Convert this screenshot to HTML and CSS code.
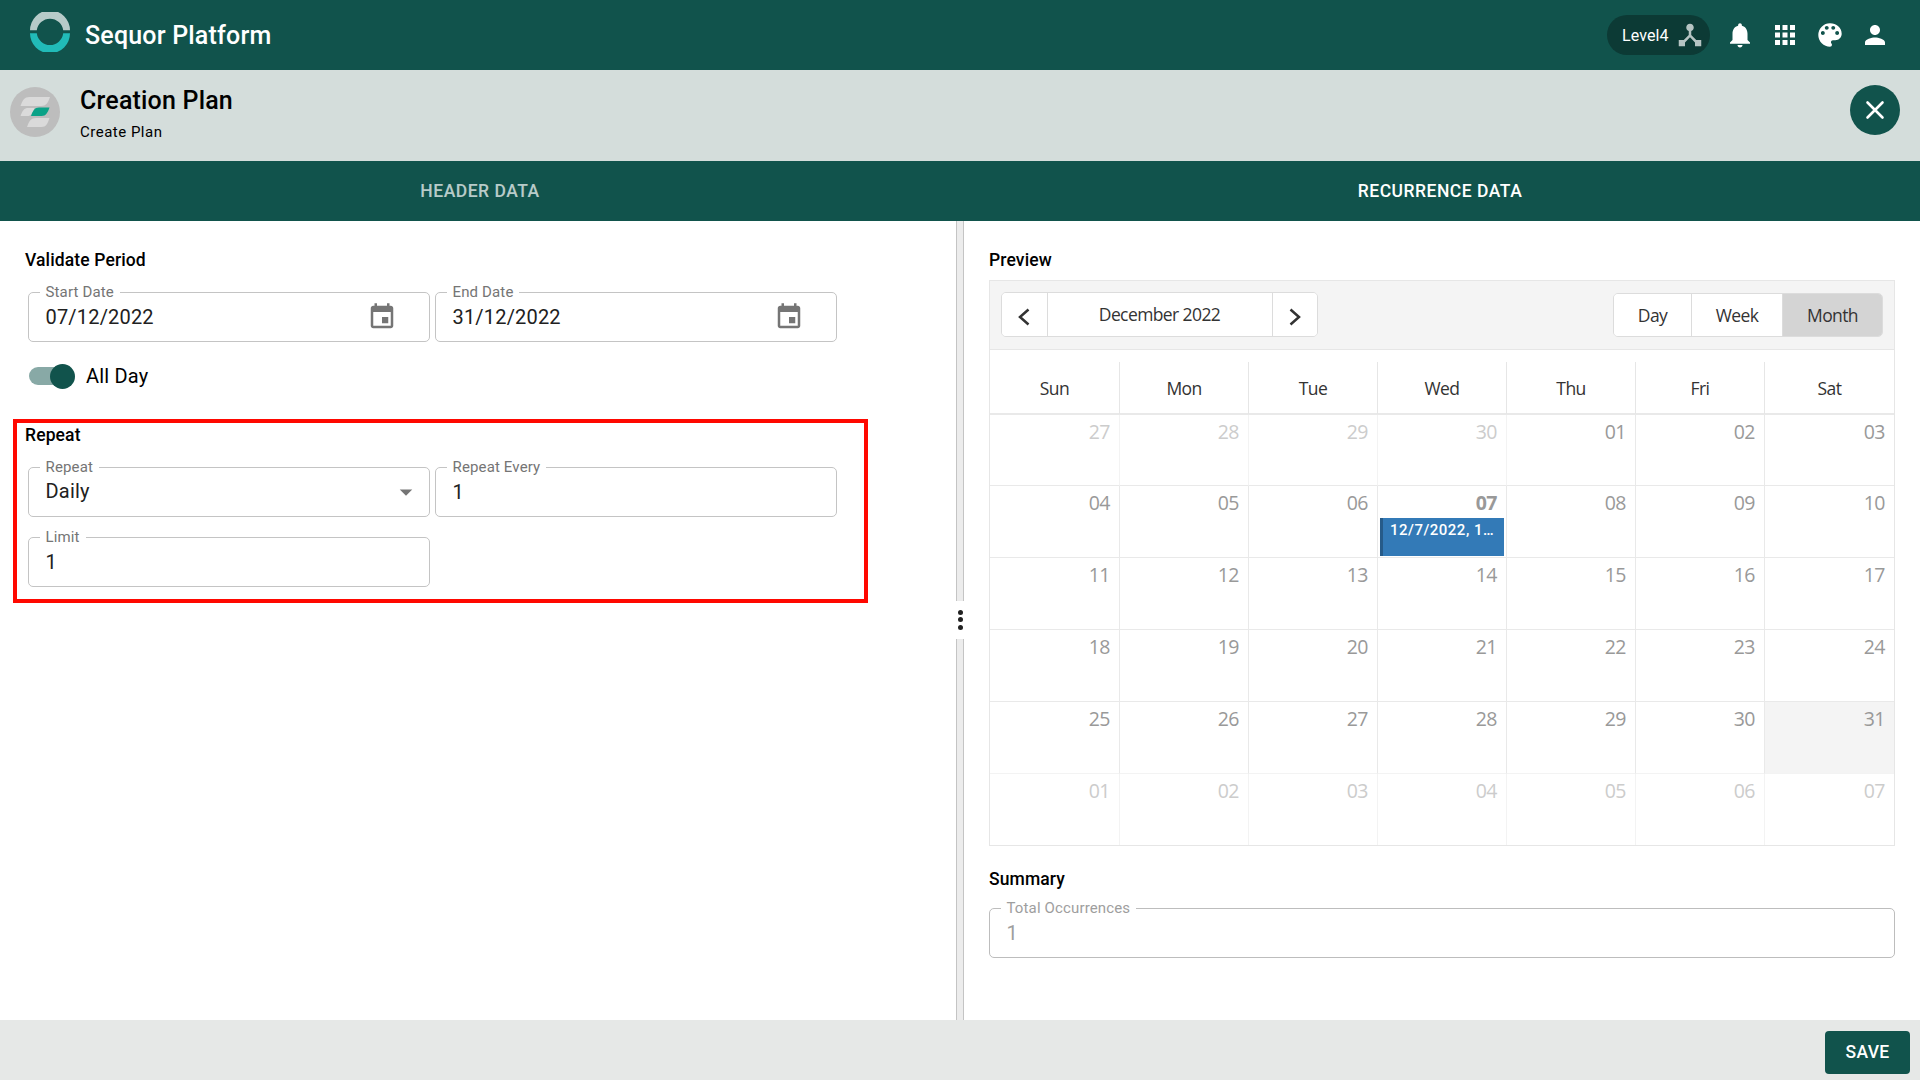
FILE: index.html
```html
<!DOCTYPE html>
<html lang="en">
<head>
  <meta charset="UTF-8">
  <meta name="viewport" content="width=device-width, initial-scale=1.0">
  <title>Sequor Platform</title>
  <link rel="stylesheet" href="styles.css">
</head>
<body>
  <!-- Top bar -->
  <header class="topbar">
    <svg class="logo" viewBox="0 0 40 40">
      <path d="M0 18.3a20 20 0 0 1 40 0h-6.8a13.3 13.3 0 0 0-26.4 0z" fill="#b7cbc9"/>
      <path d="M0 21.3a20 20 0 0 0 40 0h-6.8a13.3 13.3 0 0 1-26.4 0z" fill="#21bbb8"/>
    </svg>
    <div class="brand">Sequor Platform</div>
    <div class="level">
      <span>Level4</span>
      <svg class="icon" viewBox="0 0 24 24"><path d="M17 16l-4-4V8.82C14.16 8.4 15 7.3 15 6c0-1.66-1.34-3-3-3S9 4.34 9 6c0 1.3.84 2.4 2 2.82V12l-4 4H3v5h5v-3.05l4-4.2 4 4.2V21h5v-5h-4z"/></svg>
    </div>
    <div class="actions">
      <svg class="icon" viewBox="0 0 24 24"><path d="M12 22c1.1 0 2-.9 2-2h-4c0 1.1.89 2 2 2zm6-6v-5c0-3.07-1.64-5.64-4.5-6.32V4c0-.83-.67-1.5-1.5-1.5s-1.5.67-1.5 1.5v.68C7.63 5.36 6 7.92 6 11v5l-2 2v1h16v-1l-2-2z"/></svg>
      <svg class="icon" viewBox="0 0 24 24"><path d="M4 8h4V4H4v4zm6 12h4v-4h-4v4zm-6 0h4v-4H4v4zm0-6h4v-4H4v4zm6 0h4v-4h-4v4zm6-10v4h4V4h-4zm-6 4h4V4h-4v4zm6 6h4v-4h-4v4zm0 6h4v-4h-4v4z"/></svg>
      <svg class="icon palette" viewBox="0 0 24 24"><path d="M12 3a9 9 0 0 0 0 18c.83 0 1.5-.67 1.5-1.5 0-.39-.15-.74-.39-1.01-.23-.26-.38-.61-.38-.99 0-.83.67-1.5 1.5-1.5H16c2.76 0 5-2.24 5-5 0-4.42-4.03-8-9-8zm-5.5 9c-.83 0-1.5-.67-1.5-1.5S5.67 9 6.5 9 8 9.67 8 10.5 7.33 12 6.5 12zm3-4C8.67 8 8 7.33 8 6.5S8.67 5 9.5 5s1.5.67 1.5 1.5S10.33 8 9.5 8zm5 0c-.83 0-1.5-.67-1.5-1.5S13.67 5 14.5 5s1.5.67 1.5 1.5S15.33 8 14.5 8zm3 4c-.83 0-1.5-.67-1.5-1.5S16.67 9 17.5 9s1.5.67 1.5 1.5-.67 1.5-1.5 1.5z"/></svg>
      <svg class="icon" viewBox="0 0 24 24"><path d="M12 12c2.21 0 4-1.79 4-4s-1.79-4-4-4-4 1.79-4 4 1.79 4 4 4zm0 2c-2.67 0-8 1.34-8 4v2h16v-2c0-2.66-5.33-4-8-4z"/></svg>
    </div>
  </header>

  <!-- Page title -->
  <div class="page-head">
    <svg class="avatar" viewBox="0 0 50 50">
      <circle cx="25" cy="25" r="25" fill="#bdbdbd"/>
      <path d="M10.500 19c2-6 4-9 9-9h20.500c-2 6-4 9-9 9z" fill="#dadada"/>
      <path d="M10.500 29c2-5.500 3.500-8 8-8h6c-2 5.500-3.500 8-7 8z" fill="#dadada"/>
      <path d="M21 29c2-5.500 3.500-8.500 8-8.500h10.500c-2 5.500-3.500 8.500-8 8.500z" fill="#0aa287"/>
      <path d="M17 40c2-6 4-9 9-9h13.500c-2 6-3.500 9-8 9z" fill="#dadada"/>
    </svg>
    <div class="titles">
      <h1>Creation Plan</h1>
      <p>Create Plan</p>
    </div>
    <button class="close-button" aria-label="Close">
      <svg viewBox="0 0 20 20"><path d="M2.500 2.500l15 15M17.500 2.500l-15 15" stroke="#fff" stroke-width="2.600" stroke-linecap="round"/></svg>
    </button>
  </div>

  <nav class="tabs">
    <a class="tab">HEADER DATA</a>
    <a class="tab active">RECURRENCE DATA</a>
  </nav>

  <main class="content">
    <!-- Form -->
    <section class="form-panel">
      <h2>Validate Period</h2>
      <div class="fields">
        <div class="field">
          <span class="field-label">Start Date</span>
          <span class="field-value">07/12/2022</span>
          <svg class="icon date-icon" viewBox="0 0 24 24"><path d="M17 12h-5v5h5v-5zM16 1v2H8V1H6v2H5c-1.110 0-1.990.9-1.990 2L3 19c0 1.100.89 2 2 2h14c1.100 0 2-.9 2-2V5c0-1.100-.9-2-2-2h-1V1h-2zm3 18H5V8h14v11z"/></svg>
        </div>
        <div class="field">
          <span class="field-label">End Date</span>
          <span class="field-value">31/12/2022</span>
          <svg class="icon date-icon" viewBox="0 0 24 24"><path d="M17 12h-5v5h5v-5zM16 1v2H8V1H6v2H5c-1.110 0-1.990.9-1.990 2L3 19c0 1.100.89 2 2 2h14c1.100 0 2-.9 2-2V5c0-1.100-.9-2-2-2h-1V1h-2zm3 18H5V8h14v11z"/></svg>
        </div>
      </div>
      <div class="all-day">
        <div class="switch"><div class="thumb"></div></div>
        <span>All Day</span>
      </div>

      <div class="repeat-box">
        <h2>Repeat</h2>
        <div class="fields">
          <div class="field select">
            <span class="field-label">Repeat</span>
            <span class="field-value">Daily</span>
            <svg class="icon" viewBox="0 0 24 24"><path d="M7 10l5 5 5-5z"/></svg>
          </div>
          <div class="field">
            <span class="field-label">Repeat Every</span>
            <span class="field-value">1</span>
          </div>
          <div class="field">
            <span class="field-label">Limit</span>
            <span class="field-value">1</span>
          </div>
        </div>
      </div>
    </section>

    <!-- Drag handle between the two panels -->
    <div class="splitter">
      <div class="handle"><i></i><i></i><i></i></div>
    </div>

    <!-- Calendar -->
    <section class="preview-panel">
      <h2>Preview</h2>
      <div class="calendar">
        <div class="cal-toolbar">
          <div class="group nav-group">
            <button aria-label="Previous"><svg viewBox="0 0 12 18"><path d="M10.500 1.500L2 9l8.500 7.500"/></svg></button>
            <button class="current">December 2022</button>
            <button aria-label="Next"><svg viewBox="0 0 12 18"><path d="M1.500 1.500L10 9l-8.500 7.500"/></svg></button>
          </div>
          <div class="group view-group">
            <button>Day</button>
            <button>Week</button>
            <button class="selected">Month</button>
          </div>
        </div>
        <div class="cal-days">
          <div>Sun</div><div>Mon</div><div>Tue</div><div>Wed</div><div>Thu</div><div>Fri</div><div>Sat</div>
        </div>
        <div class="cal-grid">
          <div class="out">27</div><div class="out">28</div><div class="out">29</div><div class="out">30</div><div>01</div><div>02</div><div>03</div>
          <div>04</div><div>05</div><div>06</div><div class="now">07<span class="event">12/7/2022, 1…</span></div><div>08</div><div>09</div><div>10</div>
          <div>11</div><div>12</div><div>13</div><div>14</div><div>15</div><div>16</div><div>17</div>
          <div>18</div><div>19</div><div>20</div><div>21</div><div>22</div><div>23</div><div>24</div>
          <div>25</div><div>26</div><div>27</div><div>28</div><div>29</div><div>30</div><div class="picked">31</div>
          <div class="out">01</div><div class="out">02</div><div class="out">03</div><div class="out">04</div><div class="out">05</div><div class="out">06</div><div class="out">07</div>
        </div>
      </div>

      <h2 class="summary-title">Summary</h2>
      <div class="field disabled">
        <span class="field-label">Total Occurrences</span>
        <span class="field-value">1</span>
      </div>
    </section>
  </main>

  <footer class="footer">
    <button class="save-button">SAVE</button>
  </footer>
</body>
</html>
```

FILE: styles.css
```css
* {
  box-sizing: border-box;
}

body {
  display: flex;
  flex-direction: column;
  height: 100vh;
  margin: 0;
  overflow: hidden;
  background-color: #fff;
  color: #000;
  font-family: Roboto, "Liberation Sans", sans-serif;
}

h1, h2, p {
  margin: 0;
}

button {
  padding: 0;
  border: none;
  font-family: inherit;
  cursor: pointer;
}

.icon {
  width: 30px;
  height: 30px;
  fill: currentColor;
}

/* Top bar */
.topbar {
  display: flex;
  align-items: center;
  flex: 0 0 70px;
  padding: 0 30px;
  background-color: #11534c;
  color: #fff;
}

.logo {
  width: 40px;
  height: 40px;
  margin: -6px 15px 0 0;
}

.brand {
  font-size: 25px;
  font-weight: 500;
  letter-spacing: 0.0075em;
}

.level {
  display: flex;
  align-items: center;
  justify-content: space-between;
  width: 103px;
  height: 40px;
  margin-left: auto;
  padding: 0 5px 0 15px;
  border-radius: 20px;
  background-color: #0c3a35;
  font-size: 16px;
  letter-spacing: 0.1px;
}

.level .icon {
  opacity: 0.7;
}

.actions {
  display: flex;
  gap: 15px;
  margin-left: 15px;
}

.palette {
  transform: scale(1.04);
}

/* Page title */
.page-head {
  display: flex;
  flex: 0 0 91px;
  padding: 15px 20px 0 10px;
  background-color: #d4dddb;
}

.avatar {
  width: 50px;
  height: 50px;
  margin-top: 2px;
}

.titles {
  flex: 1;
  margin-left: 20px;
}

.titles h1 {
  font-size: 25px;
  font-weight: 500;
  line-height: 32px;
  letter-spacing: 0.0075em;
}

.titles p {
  margin-top: 3px;
  font-size: 15px;
  line-height: 25px;
  letter-spacing: 0.0333em;
}

.close-button {
  display: flex;
  align-items: center;
  justify-content: center;
  width: 50px;
  height: 50px;
  border-radius: 50%;
  background-color: #11534c;
}

.close-button svg {
  width: 20px;
  height: 20px;
}

/* Tabs */
.tabs {
  display: grid;
  grid-template-columns: 1fr 1fr;
  flex: 0 0 60px;
  background-color: #11534c;
}

.tab {
  color: #fff;
  font-size: 17.5px;
  font-weight: 500;
  line-height: 60px;
  letter-spacing: 0.02857em;
  text-align: center;
  opacity: 0.7;
}

.tab.active {
  opacity: 1;
}

/* Panels */
.content {
  display: flex;
  flex: 1;
  min-height: 0;
}

h2 {
  font-size: 17.5px;
  font-weight: 500;
  line-height: 28px;
  letter-spacing: 0.00714em;
}

.form-panel {
  width: 956px;
  padding: 25px 0 0 13px;
}

.form-panel > h2 {
  padding-left: 12px;
}

.fields {
  display: grid;
  grid-template-columns: 402px 402px;
  gap: 20px 5px;
  margin: 18px 0 0 15px;
}

.field {
  position: relative;
  display: flex;
  align-items: center;
  height: 50px;
  padding-left: 16.5px;
  border: 1px solid #c4c4c4;
  border-radius: 5px;
  color: #212121;
}

/* Label sits over the top border */
.field-label {
  position: absolute;
  top: -10px;
  left: 10.5px;
  padding: 0 6px;
  background-color: #fff;
  color: #757575;
  font-size: 15px;
  line-height: 18px;
  letter-spacing: 0.00938em;
}

.field-value {
  flex: 1;
  font-size: 20px;
  letter-spacing: 0.00938em;
}

.field .icon {
  color: #757575;
}

.field .date-icon {
  margin: -1px 32px 0 0;
}

.select .icon {
  margin-right: 8px;
}

.select .field-value {
  margin-top: -2px;
}

.all-day {
  display: flex;
  align-items: center;
  height: 30px;
  margin: 19px 0 0 16px;
  font-size: 20px;
  letter-spacing: 0.00938em;
}

.switch {
  width: 42px;
  height: 18px;
  margin-right: 15px;
  border-radius: 9px;
  background-color: #88a9a6;
}

.thumb {
  width: 25px;
  height: 25px;
  margin: -3.5px 0 0 21px;
  border-radius: 50%;
  background-color: #11534c;
}

.repeat-box {
  width: 855px;
  height: 184px;
  margin-top: 28px;
  border: 4px solid #ff0800;
}

.repeat-box h2 {
  margin-top: -2px;
  padding-left: 8px;
}

.repeat-box .fields {
  margin: 18px 0 0 11px;
}

/* Splitter */
.splitter {
  display: flex;
  align-items: center;
  width: 8px;
  border: solid #c4c4c4;
  border-width: 0 1px;
  background-color: #ececec;
}

.handle {
  display: flex;
  flex-direction: column;
  align-items: center;
  justify-content: center;
  flex: 0 0 10px;
  gap: 2.500px;
  height: 38px;
  margin: -2px 0 0 -2px;
  background-color: #fff;
}

.handle i {
  width: 5px;
  height: 5px;
  border-radius: 50%;
  background-color: #212121;
}

/* Preview */
.preview-panel {
  flex: 1;
  padding: 25px 25px 0 25px;
}

.calendar {
  margin-top: 6px;
  border: 1px solid #e6e6e6;
  color: #333;
  font-family: "Open Sans", "Noto Sans", sans-serif;
}

.cal-toolbar {
  display: flex;
  justify-content: space-between;
  height: 69px;
  padding: 11px;
  border-bottom: 1px solid #e6e6e6;
  background-color: #f4f4f4;
}

.group {
  display: flex;
  height: 45px;
  border: 1px solid #dcdcdc;
  border-radius: 5px;
  overflow: hidden;
}

.group button {
  border-right: 1px solid #dcdcdc;
  background-color: #fff;
  color: #333;
  font-size: 17.5px;
  letter-spacing: -0.6px;
}

.group button:last-child {
  border-right: none;
}

.nav-group button {
  width: 46px;
  padding-right: 1px;
}

.nav-group button:last-child {
  width: 44px;
}

.nav-group .current {
  width: 225px;
  padding-bottom: 1px;
}

.nav-group svg {
  width: 12px;
  height: 18px;
  fill: none;
  stroke: #333;
  stroke-width: 2.500;
  vertical-align: middle;
}

.view-group {
  height: 44px;
  margin-top: 1px;
}

.view-group button {
  width: 78px;
}

.view-group button:nth-child(2) {
  width: 91px;
}

.view-group button:nth-child(3) {
  width: 99px;
}

.group .selected {
  background-color: #d4d4d4;
}

.cal-days, .cal-grid {
  display: grid;
  grid-template-columns: 130px repeat(6, 1fr);
}

.cal-days {
  height: 65px;
  padding-top: 12px;
  border-bottom: 2px solid #e9e9e9;
  font-size: 17.5px;
  line-height: 52px;
  letter-spacing: -0.6px;
  text-align: center;
}

.cal-days div {
  border-right: 1px solid #e6e6e6;
}

.cal-grid {
  grid-template-rows: 71px repeat(4, 72px) 71px;
}

.cal-grid div {
  position: relative;
  min-width: 0;
  padding-right: 9px;
  border-right: 1px solid #e9e9e9;
  border-bottom: 1px solid #e9e9e9;
  color: #999;
  font-size: 19.5px;
  line-height: 33px;
  letter-spacing: -0.5px;
  text-align: right;
}

.cal-days div:nth-child(7),
.cal-grid div:nth-child(7n) {
  border-right: none;
}

.cal-grid div:nth-child(n+36) {
  border-bottom: none;
}

.cal-grid .out {
  border-right-color: #f3f3f3;
  color: #ccc;
}

/* Lighter line above the days of the next month */
.cal-grid div:nth-child(n+29):nth-child(-n+35) {
  border-bottom-color: #f3f3f3;
}

.cal-grid .now {
  font-weight: 700;
}

.cal-grid .picked {
  background-color: #f4f4f4;
}

.event {
  position: absolute;
  top: 32px;
  left: 2px;
  right: 2px;
  height: 38px;
  padding: 2px 0 0 7px;
  border-left: 3px solid #265b89;
  background-color: #337ab7;
  color: #fff;
  font-family: Roboto, sans-serif;
  font-size: 15px;
  font-weight: 500;
  line-height: 20px;
  letter-spacing: 0.5px;
  text-align: left;
  white-space: nowrap;
}

.summary-title {
  margin: 19px 0 15px;
}

.disabled {
  border-color: #bdbdbd;
  color: #9e9e9e;
}

.disabled .field-label {
  color: #9e9e9e;
}

/* Footer */
.footer {
  display: flex;
  justify-content: flex-end;
  flex: 0 0 60px;
  padding: 11px 10px 0 0;
  background-color: #e6e8e7;
}

.save-button {
  width: 85px;
  height: 43px;
  padding-bottom: 2px;
  border-radius: 4px;
  background-color: #11534c;
  color: #fff;
  font-size: 17.5px;
  font-weight: 500;
  letter-spacing: 0.02em;
}
```
